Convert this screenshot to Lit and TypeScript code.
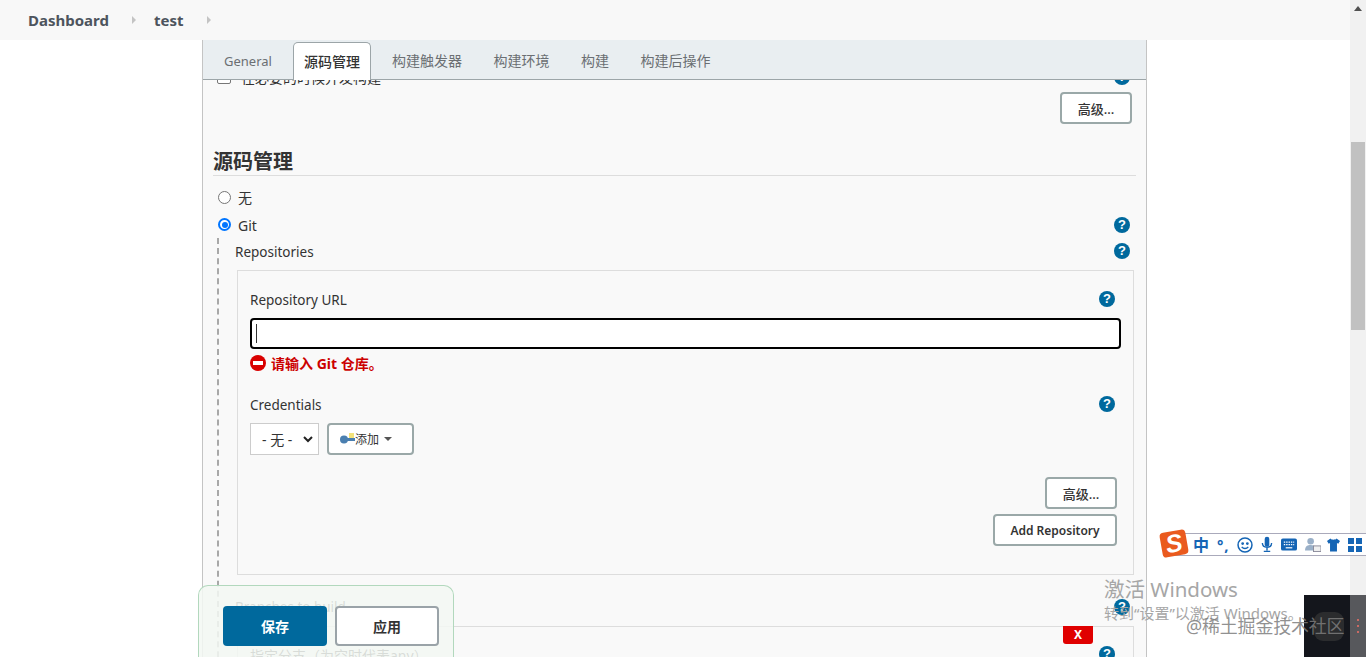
import { LitElement, html, css } from "lit";
import { customElement } from "lit/decorators.js";

const help = html`<span class="help">?</span>`;

@customElement("app-root")
export class AppRoot extends LitElement {
  static styles = css`
    :host {
      display: block;
      position: relative;
      width: 1366px;
      height: 657px;
      overflow: hidden;
      background: #fff;
      color: #333;
      font: 14px "Noto Sans", "Noto Sans CJK SC", sans-serif;
    }
    * { box-sizing: border-box; }
    .page { display: flex; flex-direction: column; width: 1350px; height: 657px; }
    .crumbs {
      flex: none; height: 40px; background: #f8f8f8; display: flex; align-items: center;
      padding-left: 28px; font-size: 15px; font-weight: 700; color: #4d545d;
    }
    .crumbs .tri { width: 0; height: 0; border-left: 4px solid #c4c4c4; border-top: 4px solid transparent; border-bottom: 4px solid transparent; margin: 0 18px 0 23px; }
    .crumbs .tri.b { margin: 0 0 0 23px; }
    .panel {
      flex: 1; min-height: 0; margin-left: 202px; width: 945px; display: flex; flex-direction: column;
      background: #f9f9f9; border-left: 1px solid #c4c4c4; border-right: 1px solid #c4c4c4;
    }
    .tabs {
      flex: none; height: 40px; background: #e9eef1; border-bottom: 1px solid #9ca5a8;
      display: flex; align-items: flex-end; padding-left: 21px; color: #6b6f73;
    }
    .tab { height: 39px; display: flex; align-items: center; margin-right: 31.5px; white-space: nowrap; font-size: 14px; }
    .tab.active {
      height: 38px; width: 78px; margin: 0 21px; justify-content: center; background: #fff; color: #333; font-weight: 500;
      border: 1px solid #9ca5a8; border-bottom: none; border-radius: 5px 5px 0 0; position: relative; top: 1px; padding-bottom: 2px;
    }
    .tab.first { margin-right: 0; font-size: 13px; padding-top: 2px; }
    .scroll { flex: 1; min-height: 0; overflow: hidden; padding: 0 10px; }
    .inner { margin-top: -16px; }
    .row { display: flex; align-items: center; justify-content: space-between; padding-right: 6px; }
    .left { display: flex; align-items: center; }
    .r1 { height: 26px; padding-left: 4px; }
    .check { width: 14px; height: 14px; border: 1px solid #777; border-radius: 2px; background: #fff; margin-right: 10px; }
    .help {
      width: 16px; height: 16px; border-radius: 50%; background: #00699d; color: #fff;
      font: 700 13px/16px "Liberation Sans", sans-serif; text-align: center; flex: none;
    }
    .btn {
      display: inline-flex; align-items: center; justify-content: center; background: #fff; color: #333;
      border: 2px solid #9aa8a8; border-radius: 4px; font-size: 13px; font-weight: 500; height: 32px; white-space: nowrap;
    }
    .adv { width: 72px; }
    .end { display: flex; justify-content: flex-end; padding-right: 4px; }
    .adv-top { margin-top: 2px; }
    h2 {
      margin: 0; height: 52px; padding-top: 25px; font-size: 20px; line-height: 26px; font-weight: 700; color: #333;
      border-bottom: 1px solid #ddd;
    }
    .radio { height: 27px; padding-left: 5px; }
    .radio-wrap { margin-top: 8px; }
    .nudge { position: relative; top: 1px; }
    .nudge-up { position: relative; top: -1px; }
    .dot { width: 13px; height: 13px; border-radius: 50%; border: 1px solid #767676; background: #fff; margin-right: 7px; flex: none; }
    .dot.on { border: 2px solid #0075ff; padding: 1.5px; background: #fff; }
    .dot.on::after { content: ""; display: block; width: 6px; height: 6px; border-radius: 50%; background: #0075ff; }
    .git { margin-left: 4px; border-left: 2px dashed #a8a8a8; padding-left: 16px; height: 500px; }
    .rep-label { height: 26px; margin-bottom: 6px; font-size: 13.5px; }
    .box { border: 1px solid #ddd; margin-left: 2px; margin-right: 2px; padding: 0 12px; }
    .box.one { height: 305px; padding-top: 16px; }
    .lbl { height: 24px; font-size: 13.5px; }
    .field { height: 31px; border: 2px solid #000; border-radius: 4px; background: #fff; margin-top: 7px; padding: 4px; }
    .caret { width: 1px; height: 19px; background: #333; }
    .err { display: flex; align-items: center; gap: 5px; margin-top: 5px; height: 18px; color: #cc0000; font-size: 14px; font-weight: 700; white-space: nowrap; }
    .cred { margin-top: 20px; }
    .controls { display: flex; gap: 8px; margin-top: 7px; }
    .select {
      width: 69px; height: 32px; background: #fff; border: 1px solid #ccc; display: flex; align-items: center; justify-content: space-between;
      padding: 0 5px 0 11px; color: #333;
    }
    .add { width: 87px; justify-content: flex-start; padding-left: 11px; font-weight: 400; font-size: 12px; }
    .caretd { width: 0; height: 0; border-top: 4px solid #555; border-left: 4px solid transparent; border-right: 4px solid transparent; margin-left: 5px; }
    .stack { display: flex; flex-direction: column; align-items: flex-end; gap: 5px; margin-top: 22px; padding-right: 4px; }
    .add-repo { width: 124px; font-size: 12px; font-weight: 600; }
    .branch { margin-top: 19px; height: 26px; font-size: 13.5px; }
    .box.two { height: 60px; margin-top: 6px; position: relative; }
    .x {
      position: absolute; top: -1px; right: 40px; width: 30px; height: 18px; background: #e00000; color: #fff;
      font-size: 12px; font-weight: 700; text-align: center; line-height: 18px; border-radius: 0 0 3px 3px;
    }
    .b2 { height: 35px; padding-top: 19px; }
    .scrollbar { position: absolute; right: 0; top: 0; width: 16px; height: 657px; background: #f1f1f1; }
    .scrollbar .up { position: absolute; left: 4px; top: 6px; width: 0; height: 0; border-bottom: 5px solid #505050; border-left: 4px solid transparent; border-right: 4px solid transparent; }
    .scrollbar .thumb { position: absolute; left: 1px; right: 1px; top: 142px; height: 188px; background: #c1c1c1; }
    .savebar {
      position: absolute; left: 198px; top: 585px; width: 256px; height: 72px; background: rgba(243, 248, 243, 0.86);
      border: 1px solid #b2d8bd; border-bottom: none; border-radius: 10px 10px 0 0;
      display: flex; gap: 8px; padding: 20px 0 0 24px;
    }
    .savebar .s { width: 104px; height: 40px; border-radius: 4px; display: flex; align-items: center; justify-content: center; font-weight: 700; font-size: 14px; }
    .save { background: #00699d; color: #fff; }
    .apply { background: #fff; color: #333; border: 2px solid #9aa3a8; }
    .activate { position: absolute; left: 1104px; top: 576px; color: #a6a6a6; }
    .activate div:first-child { font-size: 20.5px; line-height: 26px; }
    .activate div:last-child { font-size: 15px; line-height: 20px; margin-top: 1px; white-space: nowrap; }
    .ime {
      position: absolute; left: 1174px; top: 533px; width: 192px; height: 23px; background: #fff; border: 1px solid #aab; border-right: none;
      display: flex; align-items: center; padding-left: 18px; color: #1565b5;
    }
    .ime .zh { font-size: 16px; font-weight: 700; width: 16px; margin-right: 8px; line-height: 20px; }
    .ime .pt { font-size: 15px; font-weight: 700; width: 13px; margin-right: 7px; line-height: 20px; letter-spacing: 1px; }
    .ime svg { display: block; flex: none; margin-right: 8px; }
    .ime svg.tight { margin-right: 6px; }
    .slogo {
      position: absolute; left: 1161px; top: 531px; width: 26px; height: 25px; background: #ea5a1e; border-radius: 4px; transform: rotate(-10deg);
      color: #fff; font: italic 700 25px/25px "Liberation Sans", sans-serif; text-align: center;
    }
    .dark { position: absolute; left: 1304px; top: 595px; width: 46px; height: 62px; background: #14161c; }
    .dark i { position: absolute; left: 10px; top: 17px; width: 30px; height: 29px; border-radius: 9px; background: #2b2c2e; }
    .dark2 { position: absolute; left: 1350px; top: 595px; width: 16px; height: 62px; background: #57585c; }
    .dark2 b { position: absolute; left: 7px; width: 2px; height: 2px; background: #c96a64; }
    .d1 { top: 24px; } .d2 { top: 30px; } .d3 { top: 36px; }
    .wm { position: absolute; left: 1186px; top: 613px; font-size: 18px; letter-spacing: -0.2px; line-height: 26px; color: rgba(125, 125, 125, 0.85); white-space: nowrap; }
  `;

  render() {
    return html`
      <div class="page">
        <div class="crumbs">
          <span>Dashboard</span><span class="tri"></span><span>test</span><span class="tri b"></span>
        </div>
        <div class="panel">
          <div class="tabs">
            <div class="tab first">General</div>
            <div class="tab active">源码管理</div>
            <div class="tab">构建触发器</div>
            <div class="tab">构建环境</div>
            <div class="tab">构建</div>
            <div class="tab">构建后操作</div>
          </div>
          <div class="scroll">
            <div class="inner">
              <div class="row r1">
                <div class="left"><span class="check"></span><span>在必要的时候并发构建</span></div>
                ${help}
              </div>
              <div class="end adv-top"><span class="btn adv">高级...</span></div>
              <h2>源码管理</h2>
              <div class="radio-wrap">
                <div class="row radio"><div class="left"><span class="dot"></span><span class="nudge-up">无</span></div></div>
                <div class="row radio"><div class="left"><span class="dot on"></span><span class="nudge">Git</span></div>${help}</div>
              </div>
              <div class="git">
                <div class="row rep-label"><span class="nudge">Repositories</span>${help}</div>
                <div class="box one">
                  <div class="row lbl"><span class="nudge">Repository URL</span>${help}</div>
                  <div class="field"><div class="caret"></div></div>
                  <div class="err">
                    <svg width="16" height="16" viewBox="0 0 16 16"><circle cx="8" cy="8" r="8" fill="#d90000"/><rect x="3" y="6" width="10" height="4" fill="#fff"/></svg>
                    <span>请输入 Git 仓库。</span>
                  </div>
                  <div class="row lbl cred"><span class="nudge">Credentials</span>${help}</div>
                  <div class="controls">
                    <div class="select"><span>- 无 -</span>
                      <svg width="10" height="7" viewBox="0 0 10 7"><path d="M1 1l4 4 4-4" fill="none" stroke="#222" stroke-width="2"/></svg>
                    </div>
                    <span class="btn add">
                      <svg width="15" height="12" viewBox="0 0 15 12"><rect x="9" y="0" width="5" height="5" fill="#f3e27a"/><circle cx="4" cy="6.500" r="4" fill="#4a7fb0"/><rect x="6" y="5" width="9" height="3" fill="#4a7fb0"/></svg>
                      <span>添加</span><span class="caretd"></span>
                    </span>
                  </div>
                  <div class="stack">
                    <span class="btn adv">高级...</span>
                    <span class="btn add-repo">Add Repository</span>
                  </div>
                </div>
                <div class="row branch"><span>Branches to build</span>${help}</div>
                <div class="box two">
                  <span class="x">X</span>
                  <div class="row b2"><span class="nudge">指定分支（为空时代表any）</span>${help}</div>
                </div>
              </div>
            </div>
          </div>
        </div>
      </div>
      <div class="scrollbar"><span class="up"></span><span class="thumb"></span></div>
      <div class="savebar"><div class="s save">保存</div><div class="s apply">应用</div></div>
      <div class="activate"><div>激活 Windows</div><div>转到“设置”以激活 Windows。</div></div>
      <div class="ime">
        <span class="zh">中</span><span class="pt">°,</span>
        <svg width="16" height="16" viewBox="0 0 17 17" fill="none" stroke="#1565b5" stroke-width="1.6"><circle cx="8.500" cy="8.500" r="7.400"/><circle cx="6" cy="7" r=".7"/><circle cx="11" cy="7" r=".7"/><path d="M5 10.500c2 2.400 5 2.400 7 0"/></svg>
        <svg width="12" height="17" viewBox="0 0 13 17" fill="#1565b5"><rect x="4" y="0" width="5" height="11" rx="2.500"/><path d="M1.500 7c0 6 10 6 10 0M6.500 12v3M3 16h7" fill="none" stroke="#1565b5" stroke-width="1.500"/></svg>
        <svg width="16" height="13" viewBox="0 0 17 13"><rect width="17" height="13" rx="2" fill="#1565b5"/><path d="M3 4h11M3 6.700h11" stroke="#fff" stroke-width="1.300" stroke-dasharray="1.500 1"/><path d="M5 10h7" stroke="#fff" stroke-width="1.300"/></svg>
        <svg class="tight" width="16" height="15" viewBox="0 0 17 15"><circle cx="6" cy="4" r="3.500" fill="#9ab0c8"/><path d="M0 14c0-5 3-6 6-6s5 1 6 3v3z" fill="#9ab0c8"/><rect x="9" y="9" width="8" height="6" fill="#eee" stroke="#889"/></svg>
        <svg width="13" height="14" viewBox="0 0 15 15" fill="#1565b5"><path d="M4 0L0 3l2 3 1.500-.800V15h8V5.200L13 6l2-3-4-3c-1 1.800-6 1.800-7 0z"/></svg>
        <svg width="14" height="14" viewBox="0 0 14 14" fill="#1565b5"><rect width="6" height="6"/><rect x="8" width="6" height="6"/><rect y="8" width="6" height="6"/><rect x="8" y="8" width="6" height="6"/></svg>
      </div>
      <div class="slogo">S</div>
      <div class="dark"><i></i></div>
      <div class="dark2"><b class="d1"></b><b class="d2"></b><b class="d3"></b></div>
      <div class="wm">@稀土掘金技术社区</div>
    `;
  }
}
